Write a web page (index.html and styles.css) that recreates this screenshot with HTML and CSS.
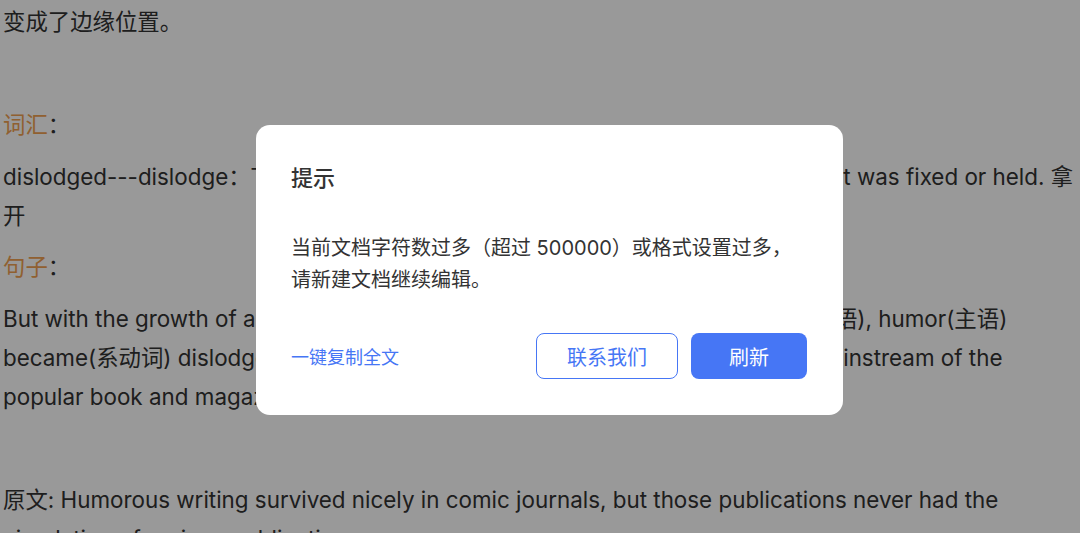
FILE: index.html
```html
<!DOCTYPE html>
<html lang="zh-CN">
<head>
    <meta charset="UTF-8">
    <meta name="viewport" content="width=device-width, initial-scale=1.0">
    <title>提示</title>
    <link rel="stylesheet" href="styles.css">
</head>
<body>
    <div class="doc">
        <p>变成了边缘位置。</p>
        <p class="empty"></p>
        <p><span class="label">词汇</span>：</p>
        <p>dislodged---dislodge：To force, or knock something out of a position in which it was fixed or held. 拿开</p>
        <p><span class="label">句子</span>：</p>
        <p>But with the growth of a large, literate and increasingly urban reading public(状语), humor(主语)<br>became(系动词) dislodged(表语) from its old and well-established role in the mainstream of the<br>popular book and magazine market(状语).</p>
        <p class="empty"></p>
        <p>原文: Humorous writing survived nicely in comic journals, but those publications never had the circulation of serious publications.</p>
    </div>

    <div class="mask">
        <div class="dialog">
            <h3 class="dialog-title">提示</h3>
            <div class="dialog-body">
                当前文档字符数过多（超过 500000）或格式设置过多，<br>请新建文档继续编辑。
            </div>
            <div class="dialog-footer">
                <a class="copy-link" href="#">一键复制全文</a>
                <div class="dialog-actions">
                    <button class="btn btn-ghost">联系我们</button>
                    <button class="btn btn-primary">刷新</button>
                </div>
            </div>
        </div>
    </div>
</body>
</html>
```

FILE: styles.css
```css
:root {
    --text: #333333;
    --label: #f0a050;
    --blue: #4676f5;
}

body {
    margin: 0;
    padding: 0;
    background-color: #ffffff;
    color: var(--text);
    font-family: Inter, "Noto Sans CJK SC", sans-serif;
    overflow: hidden;
}

.doc {
    padding: 2.6px 4px 0 3px;
    font-size: 22.4px;
    line-height: 38.7px;
}

.doc p {
    margin: 0 0 13.1px;
}

.doc p.empty {
    height: 38.7px;
}

.label {
    color: var(--label);
}

.mask {
    position: fixed;
    inset: 0;
    background-color: rgba(0, 0, 0, 0.4);
}

.dialog {
    position: absolute;
    left: 256px;
    top: 125px;
    width: 587px;
    box-sizing: border-box;
    padding: 38px 36px 36px 35px;
    background-color: #ffffff;
    border-radius: 14px;
}

.dialog-title {
    margin: 0;
    font-size: 22px;
    line-height: 30px;
    font-weight: 500;
    color: #333333;
}

.dialog-body {
    margin-top: 39px;
    font-size: 20px;
    line-height: 32px;
    color: #333333;
}

.dialog-footer {
    margin-top: 37px;
    display: flex;
    align-items: center;
    justify-content: space-between;
}

.copy-link {
    font-size: 18px;
    color: var(--blue);
    text-decoration: none;
}

.dialog-actions {
    display: flex;
    gap: 13px;
}

.btn {
    height: 46px;
    border-radius: 8px;
    font-family: inherit;
    font-size: 20px;
    cursor: pointer;
    box-sizing: border-box;
}

.btn-ghost {
    width: 142px;
    background-color: #ffffff;
    color: var(--blue);
    border: 1.5px solid var(--blue);
}

.btn-primary {
    width: 116px;
    background-color: var(--blue);
    color: #ffffff;
    border: none;
}
```
